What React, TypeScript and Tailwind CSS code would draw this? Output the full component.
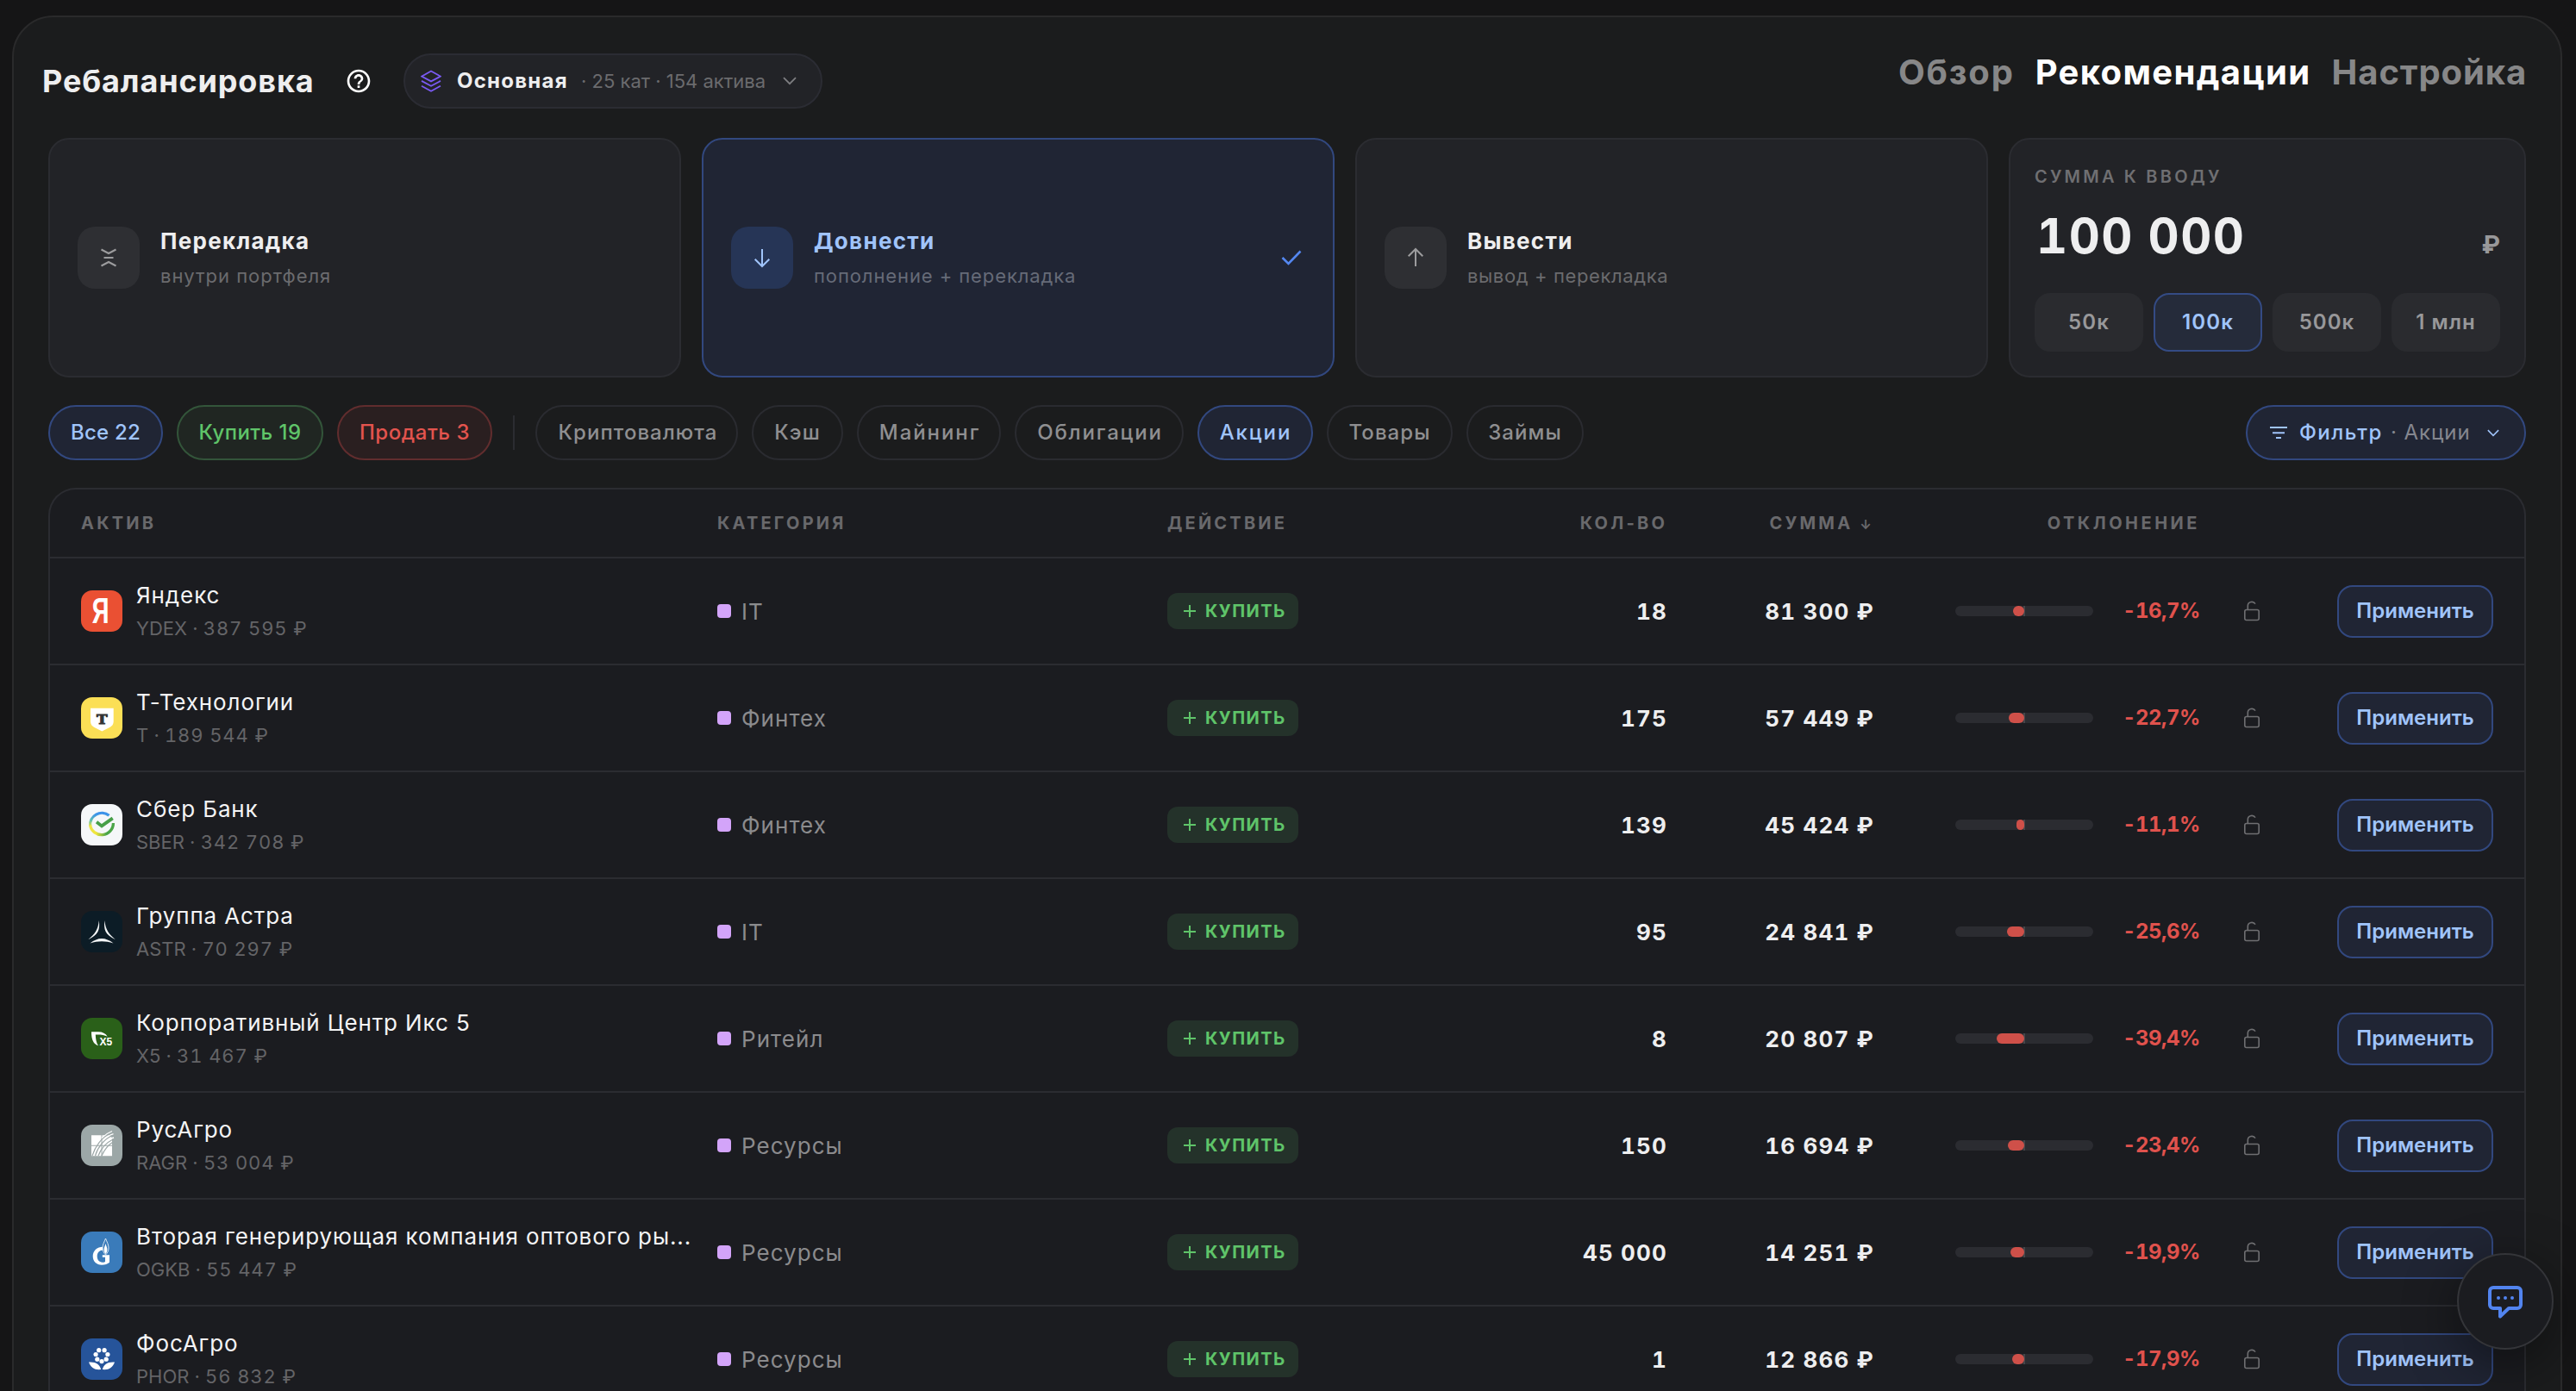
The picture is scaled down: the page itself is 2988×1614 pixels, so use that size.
import { ReactNode } from "react";
import clsx from "clsx";
import { MdHelpOutline } from "react-icons/md";

const tabs = [
  { label: "Обзор", className: "tracking-[0.045em]" },
  { label: "Рекомендации", className: "tracking-[0.034em]", active: true },
  { label: "Настройка", className: "tracking-[0.022em]" }
];

type ModeKey = "shift" | "deposit" | "withdraw";

const modes: { key: ModeKey; title: string; hint: string; hintClass: string }[] = [
  { key: "shift", title: "Перекладка", hint: "внутри портфеля", hintClass: "tracking-[0.044em]" },
  { key: "deposit", title: "Довнести", hint: "пополнение + перекладка", hintClass: "tracking-[0.041em]" },
  { key: "withdraw", title: "Вывести", hint: "вывод + перекладка", hintClass: "tracking-[0.028em]" }
];

const amounts = ["50к", "100к", "500к", "1 млн"];

const actionChips = [
  {
    label: "Все 22",
    className: "w-[133px] border-[#32487f] bg-[#202534] text-[#a0c4fa] tracking-[0.01em]"
  },
  {
    label: "Купить 19",
    className: "w-[170px] border-[#33553a] bg-[#202622] text-[#5fc469] tracking-[0.018em]"
  },
  {
    label: "Продать 3",
    className: "w-[180px] border-[#612d2e] bg-[#2a1f20] text-[#e3544e] tracking-[0.023em]"
  }
];

const categoryChips = [
  { label: "Криптовалюта", className: "w-[235px] pl-[3px] tracking-[0.043em]" },
  { label: "Кэш", className: "w-[106px] tracking-[0.045em]" },
  { label: "Майнинг", className: "w-[167px] pl-0.5 tracking-[0.08em]" },
  { label: "Облигации", className: "w-[196px] pl-0.5 tracking-[0.077em]" },
  { label: "Акции", className: "w-[134px] pl-px tracking-[0.08em]", active: true },
  { label: "Товары", className: "w-[146px] tracking-[0.045em]" },
  { label: "Займы", className: "w-[136px] tracking-[0.045em]" }
];

interface Asset {
  name: string;
  ticker: string;
  value: string;
  category: string;
  qty: string;
  sum: string;
  deviation: number;
}

const assets: Asset[] = [
  { name: "Яндекс", ticker: "YDEX", value: "387 595", category: "IT", qty: "18", sum: "81 300", deviation: -16.7 },
  { name: "Т-Технологии", ticker: "T", value: "189 544", category: "Финтех", qty: "175", sum: "57 449", deviation: -22.7 },
  { name: "Сбер Банк", ticker: "SBER", value: "342 708", category: "Финтех", qty: "139", sum: "45 424", deviation: -11.1 },
  { name: "Группа Астра", ticker: "ASTR", value: "70 297", category: "IT", qty: "95", sum: "24 841", deviation: -25.6 },
  { name: "Корпоративный Центр Икс 5", ticker: "X5", value: "31 467", category: "Ритейл", qty: "8", sum: "20 807", deviation: -39.4 },
  { name: "РусАгро", ticker: "RAGR", value: "53 004", category: "Ресурсы", qty: "150", sum: "16 694", deviation: -23.4 },
  { name: "Вторая генерирующая компания оптового ры...", ticker: "OGKB", value: "55 447", category: "Ресурсы", qty: "45 000", sum: "14 251", deviation: -19.9 },
  { name: "ФосАгро", ticker: "PHOR", value: "56 832", category: "Ресурсы", qty: "1", sum: "12 866", deviation: -17.9 }
];

const rowGrid = "grid grid-cols-[738px_522px_300px_280px_240px_378px_159px_181px] items-center pl-9";

function ModeIcon({ mode }: { mode: ModeKey }) {
  const paths: Record<ModeKey, string> = {
    shift: "M1.5 2.5 10 7l8.500-4.500M4.500 12h11M1.500 21.500 10 17l8.500 4.500",
    deposit: "M10 2v20M1.700 13.700 10 22l8.300-8.300",
    withdraw: "M10 22V2M1.700 10.300 10 2l8.300 8.300"
  };
  return (
    <svg className="h-6 w-5" viewBox="0 0 20 24" fill="none" stroke="currentColor" strokeWidth="2">
      <path d={paths[mode]} />
    </svg>
  );
}

function Chevron({ className }: { className?: string }) {
  return (
    <svg className={className} viewBox="0 0 16 10" fill="none" stroke="currentColor" strokeWidth="1.8">
      <path d="M1 1.200 8 8.200l7-7" />
    </svg>
  );
}

function LockOpen() {
  return (
    <svg className="h-[26px] w-5" viewBox="0 0 20 26" fill="none" stroke="currentColor" strokeWidth="1.6">
      <rect x="1.800" y="11.500" width="16.400" height="12" rx="2" />
      <path d="M5.300 11.500V7c0-5 6.500-6 8.700-2.400" />
    </svg>
  );
}

function Logo({ ticker }: { ticker: string }) {
  const logos: Record<string, { bg: string; art: ReactNode }> = {
    YDEX: {
      bg: "bg-[#ea5033]",
      art: (
        <text
          x="12.500"
          y="37.800"
          textLength="20.500"
          lengthAdjust="spacingAndGlyphs"
          className="fill-white font-['Inter',sans-serif] text-[40px] font-semibold"
        >
          Я
        </text>
      )
    },
    T: {
      bg: "bg-[#fbdf56]",
      art: (
        <>
          <path d="M11 12.700h26.700v15.500c0 3-1.700 5.200-4 6.500l-9.400 4.800-9.300-4.800c-2.300-1.300-4-3.500-4-6.500z" fill="#fff" />
          <text
            x="17.900"
            y="31"
            textLength="12.600"
            lengthAdjust="spacingAndGlyphs"
            stroke="#333"
            strokeWidth="0.9"
            className="fill-[#333] font-['DejaVu_Serif',serif] text-[14.500px] font-bold"
          >
            T
          </text>
        </>
      )
    },
    SBER: {
      bg: "bg-[#f5f7f9]",
      art: (
        <>
          <defs>
            <linearGradient id="sberTop" x1="0" y1="0" x2="0" y2="1">
              <stop offset="0.1" stopColor="#3d93ea" />
              <stop offset="0.55" stopColor="#5dbfb0" />
              <stop offset="1" stopColor="#dbe04a" />
            </linearGradient>
            <linearGradient id="sberBottom" x1="0" y1="0" x2="1" y2="0">
              <stop offset="0" stopColor="#ece345" />
              <stop offset="0.25" stopColor="#f1e63c" />
              <stop offset="0.7" stopColor="#4ba548" />
            </linearGradient>
          </defs>
          <g fill="none" strokeWidth="3.300">
            <path d="M32.500 13.300A13.500 13.500 0 0 0 10.700 25.500" stroke="url(#sberTop)" />
            <path d="M10.600 24.500A13.500 13.500 0 0 0 37.400 22" stroke="url(#sberBottom)" />
            <path d="M18 20.800l6 4.600 12.700-9" stroke="#479f48" strokeWidth="3.800" />
          </g>
        </>
      )
    },
    ASTR: {
      bg: "bg-[#0c1c26]",
      art: (
        <g fill="#f4f6f7">
          <path d="M20.800 11c1.300 10.500-.5 16.500-12.500 22.200C16 26.500 19.800 22 20.800 11z" />
          <path d="M27.400 11c-1.300 10.500.5 16.500 12.500 22.200C32.200 26.500 28.400 22 27.400 11z" />
          <path d="M10.500 37.600c9-7.400 18-7.400 27 0-9-3-18-3-27 0z" />
        </g>
      )
    },
    X5: {
      bg: "bg-[#2a6019]",
      art: (
        <>
          <path
            d="M12 16.300h8c5 0 8.500 2 10.700 5.400-4-1.900-7.700-2.400-13.900-2.200.2 5.500 1 9.500 3.200 12.700C14.500 30.700 12 25.500 12 16.300z"
            fill="#fff"
          />
          <text x="21.500" y="32.300" className="fill-white font-['Liberation_Sans',sans-serif] text-[12px] font-bold">
            X5
          </text>
        </>
      )
    },
    RAGR: {
      bg: "bg-[#9ca7a7]",
      art: (
        <>
          <path d="M12 12.300h11.500v11.500H12zM24.500 24.800H36v11.500H24.500zM12 24.800h11.500v11.500H12z" fill="#fff" />
          <path d="M24.500 12.300h7L36 15v8.800H24.500z" fill="#fff" />
          <g fill="none" stroke="#fff" strokeWidth="1.300">
            <path d="M24 15.500c4-4 8-6.500 12-8M29 15c3-2 6-3.600 8.500-4.300M32 18c2-1.500 4-2.600 6-3" />
          </g>
          <g fill="none" stroke="#9ca7a7" strokeWidth="1.200">
            <path d="M13 36C16 26 24 14 34 10.500M16.500 36C19 27 27 16 37 12.500M20 36c3-8 9-15 17-19M24 36c3-7 7-12 13-16" />
          </g>
        </>
      )
    },
    OGKB: {
      bg: "bg-[#3a7bba]",
      art: (
        <>
          <path
            d="M25.500 17.800C18.500 17.800 13.700 22.500 13.700 28.500S18 38.800 24 38.800c3.700 0 6.800-1 9-3V27.300H24.800v2.400h3.200v5.200c-1 .6-2 .8-3.300.8-3.600 0-6-3-6-6.900 0-4.300 2.700-7 6.800-7.200z"
            fill="#fff"
          />
          <path
            d="M28.500 8c-1.500 4-3.500 7-3.500 11 0 3.500 1.500 6 3.500 8 2-2 3.500-4.500 3.500-8 0-4-2-7-3.500-11z"
            fill="#3a7bba"
            stroke="#e8f0f8"
            strokeWidth="0.900"
          />
          <path d="M28.500 14c-.8 3-1.900 4.500-1.900 7 0 2.200.8 3.600 1.900 5 1.100-1.400 1.900-2.800 1.900-5 0-2.500-1.100-4-1.900-7z" fill="#fff" />
        </>
      )
    },
    PHOR: {
      bg: "bg-[#26549a]",
      art: (
        <g fill="#fff">
          <circle cx="20.700" cy="13.700" r="2.600" />
          <circle cx="27.100" cy="13.700" r="2.600" />
          <circle cx="17.100" cy="18.500" r="2.600" />
          <circle cx="30.900" cy="18.500" r="2.600" />
          <circle cx="18.800" cy="24.200" r="2.600" />
          <circle cx="29.200" cy="24.200" r="2.600" />
          <circle cx="24" cy="26.600" r="2.600" />
          <path d="M9 27.500c8-.6 12.800 2.300 14.200 8.600-7 .8-12-2-14.200-8.600zM39 27.500c-8-.6-12.800 2.300-14.200 8.600 7 .8 12-2 14.200-8.600z" />
        </g>
      )
    }
  };
  const { bg, art } = logos[ticker];

  return (
    <div className={clsx("size-12 shrink-0 overflow-hidden rounded-[13px]", bg)}>
      <svg className="size-12" viewBox="0 0 48 48">
        {art}
      </svg>
    </div>
  );
}

function Header() {
  return (
    <header className="flex h-[140px] items-start justify-between pr-[39px] pl-[33px]">
      <div className="mt-[42px] flex h-16 items-center">
        <h1 className="w-[351px] text-[36px] font-bold tracking-[0.024em] whitespace-nowrap text-[#eeeeef]">
          Ребалансировка
        </h1>
        <MdHelpOutline className="size-8 text-white" />
        <button
          type="button"
          className="ml-9 flex h-16 w-[486px] items-center rounded-full border-2 border-[#2b2c33] bg-[#222327] pl-[18px] whitespace-nowrap"
        >
          <svg className="h-[26px] w-6" viewBox="0 0 24 26" fill="none" stroke="#7a5af3" strokeWidth="1.800">
            <path d="M12 1.500 23 7.600 12 13.400 1 7.600zM1 12.900l11 5.800 11-5.800M1 18.700l11 6 11-6" />
          </svg>
          <span className="ml-[18px] w-[144px] text-left text-[24px] font-bold tracking-[0.052em] text-[#eeeeef]">
            Основная
          </span>
          <span className="w-[234px] text-left text-[22px] text-[#6b6b6e]">· 25 кат · 154 актива</span>
          <Chevron className="h-2.5 w-4 text-[#7d7d80]" />
        </button>
      </div>
      <nav className="flex gap-[24px] pt-8 text-[40px] leading-[64px] font-bold">
        {tabs.map((tab) => (
          <a key={tab.label} className={clsx(tab.className, tab.active ? "text-white" : "text-[#878788]")}>
            {tab.label}
          </a>
        ))}
      </nav>
    </header>
  );
}

function ModeCard({ mode, active }: { mode: (typeof modes)[number]; active: boolean }) {
  return (
    <button
      type="button"
      className={clsx(
        "flex h-[278px] w-[734px] items-center rounded-3xl border-2 px-8 text-left whitespace-nowrap",
        active ? "border-[#32487f] bg-[#202534]" : "border-[#2b2c31] bg-[#222327]"
      )}
    >
      <span
        className={clsx(
          "grid size-[72px] place-items-center rounded-[20px]",
          active ? "bg-[#263556] text-[#a0c4fa]" : "bg-[#2e2f33] text-[#9c9c9e]"
        )}
      >
        <ModeIcon mode={mode.key} />
      </span>
      <span className="ml-6 flex flex-1 flex-col pt-0.5 leading-10">
        <span className={clsx("text-[26px] font-bold tracking-[0.05em]", active ? "text-[#a0c4fa]" : "text-[#eeeeef]")}>
          {mode.title}
        </span>
        <span className={clsx("text-[22px]", mode.hintClass, active ? "text-[#666b78]" : "text-[#6b6b6e]")}>
          {mode.hint}
        </span>
      </span>
      {active && (
        <svg className="mr-1 h-[18px] w-6" viewBox="0 0 24 18" fill="none" stroke="#5487f0" strokeWidth="2.600">
          <path d="M1.500 9 8.500 16 22.500 1.500" />
        </svg>
      )}
    </button>
  );
}

function AmountCard() {
  return (
    <div className="flex h-[278px] w-[600px] flex-col rounded-3xl border-2 border-[#2b2c31] bg-[#222327] p-7">
      <p className="text-[20px] leading-[30px] font-semibold tracking-[0.16em] text-[#6f6f72]">СУММА К ВВОДУ</p>
      <div className="mt-[22px] flex h-16 items-baseline justify-between leading-[64px]">
        <span className="pl-0.5 text-[56px] font-bold tracking-[0.026em] tabular-nums text-[#eeeeef]">100 000</span>
        <span className="text-[29px] font-bold text-[#98989a]">₽</span>
      </div>
      <div className="mt-[34px] grid grid-cols-4 gap-3">
        {amounts.map((amount) => (
          <button
            key={amount}
            type="button"
            className={clsx(
              "h-[68px] rounded-[18px] border-2 text-[24px] font-semibold tracking-[0.045em]",
              amount === "100к"
                ? "border-[#344b84] bg-[#252b3a] text-[#a0c4fa]"
                : "border-transparent bg-[#2a2b2f] text-[#98989a]"
            )}
          >
            {amount}
          </button>
        ))}
      </div>
    </div>
  );
}

function Filters() {
  return (
    <div className="mt-8 flex h-16 items-center gap-4 text-[24px] font-medium whitespace-nowrap">
      {actionChips.map((chip) => (
        <button key={chip.label} type="button" className={clsx("h-16 rounded-full border-2", chip.className)}>
          {chip.label}
        </button>
      ))}
      <div className="mx-2 h-10 w-0.5 bg-[#2b2c31]" />
      {categoryChips.map((chip) => (
        <button
          key={chip.label}
          type="button"
          className={clsx(
            "h-16 rounded-full border-2",
            chip.className,
            chip.active ? "border-[#32487f] bg-[#202534] text-[#a0c4fa]" : "border-[#2a2b30] text-[#8f8f91]"
          )}
        >
          {chip.label}
        </button>
      ))}
      <button
        type="button"
        className="ml-auto flex h-16 w-[325px] items-center rounded-full border-2 border-[#32487f] bg-[#202534] pl-[26px] text-[#a0c4fa]"
      >
        <svg className="h-4 w-5" viewBox="0 0 20 16" fill="none" stroke="currentColor" strokeWidth="2">
          <path d="M0 2h20M3 8.300h14M7 14h6" />
        </svg>
        <span className="ml-[14px] w-[106px] text-left tracking-[0.06em]">Фильтр</span>
        <span className="w-[112px] text-left font-normal tracking-[0.04em] text-[#85878f]">· Акции</span>
        <Chevron className="h-[9px] w-3.5" />
      </button>
    </div>
  );
}

function AssetRow({ asset }: { asset: Asset }) {
  const percent = asset.deviation.toFixed(1).replace(".", ",");

  return (
    <div className={clsx(rowGrid, "h-[124px] border-b-2 border-[#2b2c31] whitespace-nowrap")}>
      <div className="flex items-center gap-4">
        <Logo ticker={asset.ticker} />
        <div className="pt-0.5 leading-[39px]">
          <p className="text-[26px] tracking-[0.034em] text-[#f4f4f5]">{asset.name}</p>
          <p className="text-[22px] text-[#646467]">
            {asset.ticker} · <span className="tracking-[0.04em] tabular-nums">{asset.value} ₽</span>
          </p>
        </div>
      </div>
      <div className="flex items-center gap-3">
        <span className="size-4 rounded bg-[#d3a4f9]" />
        <span className="text-[26px] tracking-[0.04em] text-[#8b8b8d]">{asset.category}</span>
      </div>
      <div className="flex h-[42px] w-[152px] items-center rounded-xl bg-[#24322a] pl-[19px] text-[#5fc469]">
        <svg className="size-3.5" viewBox="0 0 14 14" stroke="currentColor" strokeWidth="2">
          <path d="M7 0v14M0 7h14" />
        </svg>
        <span className="ml-[11px] text-[20px] font-bold tracking-[0.072em]">КУПИТЬ</span>
      </div>
      <span className="text-right text-[26px] font-bold tracking-[0.045em] tabular-nums text-[#eeeeef]">{asset.qty}</span>
      <span className="text-right text-[26px] font-bold tracking-[0.045em] tabular-nums text-[#eeeeef]">{asset.sum} ₽</span>
      <div className="flex items-center justify-between pl-[94px]">
        <div className="relative h-3 w-40 rounded-full bg-[#2b2c31]">
          <div className="absolute left-[79px] h-3 w-0.5 bg-[#45464a]" />
          <div
            className="absolute right-1/2 h-3 rounded-full bg-[#cf5049]"
            style={{ width: `${Math.abs(asset.deviation) / 2}%` }}
          />
        </div>
        <span className="text-[24px] font-bold tracking-[-0.02em] tabular-nums text-[#e0524d]">{percent}%</span>
      </div>
      <div className="pl-[50px] text-[#6f6f72]">
        <LockOpen />
      </div>
      <button
        type="button"
        className="h-[61px] rounded-[18px] border-2 border-[#32487f] bg-[#202534] text-[24px] font-semibold text-[#a0c4fa]"
      >
        Применить
      </button>
    </div>
  );
}

function AssetTable() {
  return (
    <div className="mt-8 rounded-t-[32px] border-2 border-b-0 border-[#2b2c31] bg-[#1b1c20]">
      <div
        className={clsx(
          rowGrid,
          "h-20 border-b-2 border-[#2b2c31] text-[20px] font-bold tracking-[0.16em] whitespace-nowrap text-[#69696c]"
        )}
      >
        <span>АКТИВ</span>
        <span>КАТЕГОРИЯ</span>
        <span>ДЕЙСТВИЕ</span>
        <span className="text-right">КОЛ-ВО</span>
        <span className="text-right">
          СУММА <span className="text-[15px]">↓</span>
        </span>
        <span className="text-right tracking-[0.175em]">ОТКЛОНЕНИЕ</span>
      </div>
      {assets.map((asset) => (
        <AssetRow key={asset.ticker} asset={asset} />
      ))}
    </div>
  );
}

export default function App() {
  return (
    <div className="relative h-[1614px] w-full overflow-hidden bg-[#151516] pt-[18px] font-['Inter',sans-serif]">
      <main className="mr-4 ml-3.5 rounded-t-[48px] border-2 border-[#2a2a2b] bg-[#1b1c1d]">
        <Header />
        <div className="px-10">
          <div className="flex gap-6">
            {modes.map((mode) => (
              <ModeCard key={mode.key} mode={mode} active={mode.key === "deposit"} />
            ))}
            <AmountCard />
          </div>
          <Filters />
          <AssetTable />
        </div>
      </main>

      <button
        type="button"
        className="absolute right-[26px] bottom-12 grid size-28 place-items-center rounded-full border-2 border-[#343539] bg-[#1b1c20] shadow-[0_16px_64px_rgba(0,0,0,0.45)]"
      >
        <svg className="mt-0.5 h-[38px] w-10" viewBox="0 0 40 38" fill="none">
          <path
            d="M6 2h28a4 4 0 0 1 4 4v16a4 4 0 0 1-4 4H24l-10 9.500V26H6a4 4 0 0 1-4-4V6a4 4 0 0 1 4-4z"
            stroke="#5284ef"
            strokeWidth="4"
            strokeLinejoin="round"
          />
          <g fill="#5284ef">
            <circle cx="12" cy="14" r="2" />
            <circle cx="20" cy="14" r="2" />
            <circle cx="28" cy="14" r="2" />
          </g>
        </svg>
      </button>
    </div>
  );
}
